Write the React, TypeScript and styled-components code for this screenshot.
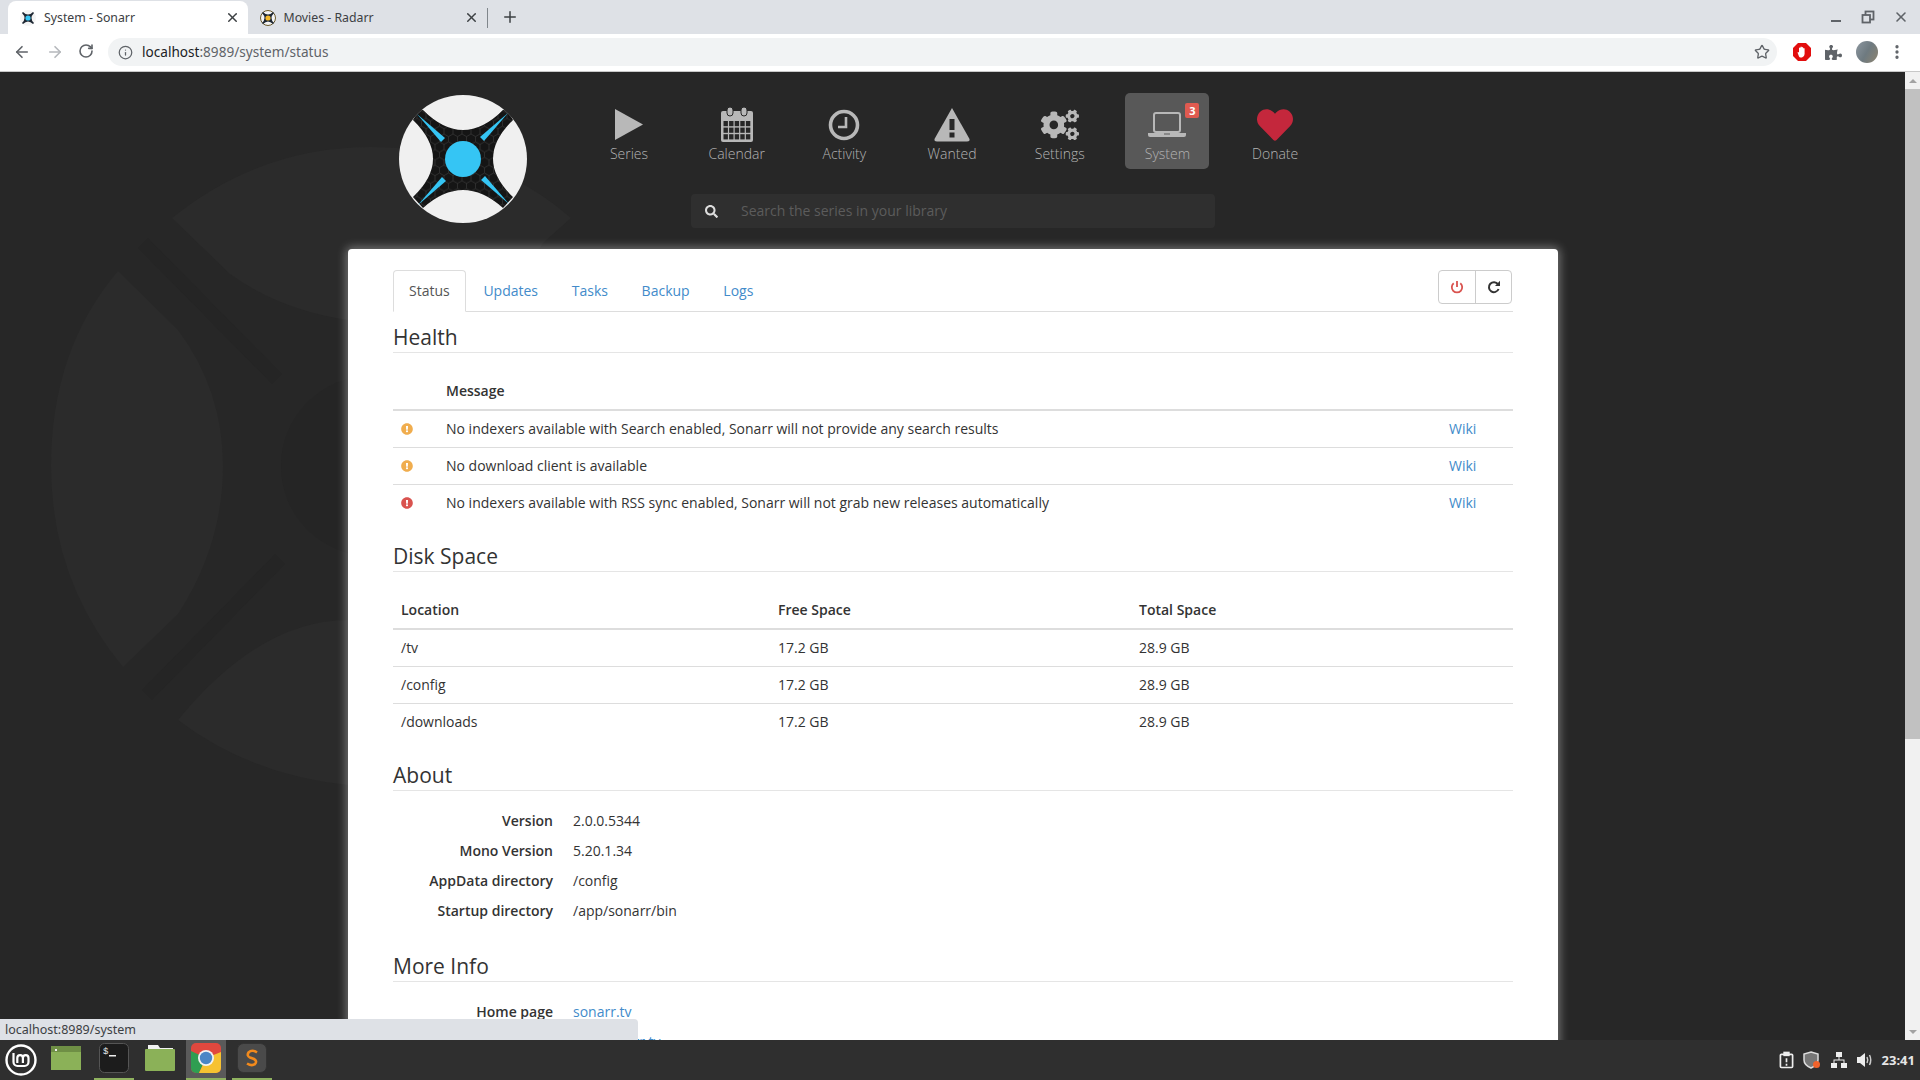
import * as React from 'react';
import styled, { createGlobalStyle } from 'styled-components';
import { ArrowLeft, ArrowRight, Info, MoreVertical, Plus, RotateCw, Star, X } from 'lucide-react';
import { FaCogs, FaExclamationCircle, FaHeart, FaPuzzlePiece, FaSearch } from 'react-icons/fa';

const GlobalStyle = createGlobalStyle`
  html, body {
    margin: 0;
    padding: 0;
    overflow: hidden;
    background: #272727;
  }
  * {
    box-sizing: border-box;
  }
`;

const Screen = styled.div`
  width: 1920px;
  height: 1080px;
  display: flex;
  flex-direction: column;
  overflow: hidden;
  font-family: 'Open Sans', sans-serif;
  font-size: 14px;
  line-height: 20px;
  color: #333;
`;

/* browser chrome */

const TabStrip = styled.div`
  height: 34px;
  flex: none;
  display: flex;
  align-items: flex-end;
  padding-left: 8px;
  background: #dee1e6;
`;

const BrowserTab = styled.div<{ $active?: boolean }>`
  width: 239.5px;
  height: 33px;
  display: flex;
  align-items: center;
  padding: 0 8px 0 12px;
  gap: 8px;
  border-radius: 8px 8px 0 0;
  background: ${p => (p.$active ? '#fff' : 'transparent')};
  font-family: 'Noto Sans', sans-serif;
  font-size: 12.3px;
  color: #3c4043;
`;

const TabTitle = styled.span`
  flex: 1;
`;

const TabSeparator = styled.div`
  width: 1px;
  height: 20px;
  margin-bottom: 6px;
  background: #80868b;
`;

const NewTab = styled.div`
  display: flex;
  margin: 0 0 8px 13px;
  color: #3c4043;
`;

const WindowControls = styled.div`
  margin-left: auto;
  display: flex;
  align-self: stretch;
  align-items: center;
  gap: 18px;
  padding-right: 11px;
  color: #5f6368;
`;

const Toolbar = styled.div`
  height: 38px;
  flex: none;
  display: flex;
  align-items: center;
  padding: 0 13px 1px 13px;
  background: #fff;
  border-bottom: 1px solid #c8c8c8;
  color: #5f6368;
`;

const NavArrows = styled.div`
  display: flex;
  gap: 14.5px;
  margin-right: 14px;
`;

const Omnibox = styled.div`
  width: 1669px;
  height: 28px;
  display: flex;
  align-items: center;
  padding: 0 7px 0 10px;
  gap: 9px;
  border-radius: 14px;
  background: #f1f3f4;
  font-family: 'Noto Sans', sans-serif;
  font-size: 13.6px;
  color: #5f6368;
`;

const Host = styled.span`
  color: #202124;
`;

const OmniText = styled.span`
  flex: 1;
`;

const ToolbarIcons = styled.div`
  display: flex;
  align-items: center;
  gap: 14px;
  margin-left: 16px;
  & > svg:last-child {
    margin-left: -4px;
  }
`;

const Avatar = styled.div`
  width: 22px;
  height: 22px;
  border-radius: 50%;
  background: linear-gradient(120deg, #8d97a0, #6e7a80 50%, #8d8470);
`;

/* page */

const Viewport = styled.div`
  flex: 1;
  min-height: 0;
  position: relative;
  display: flex;
  background: #272727;
  overflow: hidden;
`;

const Watermark = styled.svg`
  position: absolute;
  left: 0;
  top: -72px;
  width: 1920px;
  height: 1080px;
`;

const Page = styled.div`
  position: relative;
  flex: 1;
  min-width: 0;
`;

const Column = styled.div`
  width: 1210px;
  margin-left: 348px;
`;

const Header = styled.header`
  height: 177px;
  display: flex;
  padding: 21px 0 0 51px;
`;

const LogoWrap = styled.div`
  margin: 2px 60px 0 0;
  width: 128px;
  height: 128px;
`;

const HeaderRight = styled.div`
  display: flex;
  flex-direction: column;
`;

const Nav = styled.nav`
  display: flex;
  gap: 23.7px;
`;

const NavItem = styled.div<{ $active?: boolean }>`
  position: relative;
  width: 84px;
  height: 76px;
  display: flex;
  flex-direction: column;
  align-items: center;
  border-radius: 5px;
  background: ${p => (p.$active ? '#585858' : 'transparent')};
  color: #b3b3b3;
  font-weight: 300;
`;

const NavIcon = styled.div`
  height: 51px;
  padding-top: 13px;
  display: flex;
  justify-content: center;
  align-items: center;
`;

const NavLabel = styled.span`
  line-height: 20px;
`;

const Badge = styled.span`
  position: absolute;
  top: 10px;
  right: 10px;
  width: 14px;
  height: 15px;
  border-radius: 2px;
  background: #e05a50;
  color: #fff;
  font-size: 11px;
  font-weight: 700;
  line-height: 15px;
  text-align: center;
`;

const SearchBox = styled.div`
  width: 524px;
  height: 34px;
  margin: 25px 0 0 104px;
  display: flex;
  align-items: center;
  border-radius: 4px;
  background: #2f2f2f;
  color: #ddd;
`;

const SearchAddon = styled.div`
  width: 40px;
  display: flex;
  justify-content: center;
  font-size: 13px;
`;

const SearchText = styled.span`
  margin-left: 10px;
  color: #5c5c5c;
`;

const Card = styled.main`
  height: 830px;
  padding: 21px 45px 0;
  border-radius: 4px 4px 0 0;
  background: #fff;
  box-shadow: 0 0 10px 2px rgba(255, 255, 255, 0.35);
`;

const TabsRow = styled.div`
  display: flex;
  justify-content: space-between;
  height: 42px;
  border-bottom: 1px solid #ddd;
  margin-bottom: 10px;
`;

const Tabs = styled.div`
  display: flex;
  gap: 1.7px;
`;

const PageTab = styled.a<{ $active?: boolean }>`
  height: 42px;
  padding: 10px 15px;
  border: 1px solid ${p => (p.$active ? '#ddd' : 'transparent')};
  border-bottom-color: ${p => (p.$active ? '#fff' : 'transparent')};
  border-radius: 4px 4px 0 0;
  color: ${p => (p.$active ? '#555' : '#428bca')};
`;

const ButtonGroup = styled.div`
  display: flex;
  height: 34px;
  margin-right: 1px;
  border: 1px solid #ccc;
  border-radius: 4px;
`;

const IconButton = styled.div<{ $color: string }>`
  width: 36px;
  display: flex;
  align-items: center;
  justify-content: center;
  color: ${p => p.$color};
  & + & {
    border-left: 1px solid #ccc;
  }
`;

const Legend = styled.h2<{ $tight?: boolean }>`
  margin: 0 0 ${p => (p.$tight ? 19 : 20)}px;
  height: 31px;
  font-size: 21px;
  font-weight: 400;
  line-height: 30px;
  color: #333;
  border-bottom: 1px solid #e5e5e5;
`;

const Table = styled.table<{ $gap: number }>`
  width: 100%;
  margin-bottom: ${p => p.$gap}px;
  border-collapse: collapse;
  table-layout: fixed;
`;

const Col = styled.col<{ $width?: number }>`
  width: ${p => (p.$width ? `${p.$width}px` : 'auto')};
`;

const Th = styled.th<{ $short?: boolean }>`
  padding: ${p => (p.$short ? '8px 8px 7px' : '8px')};
  height: ${p => (p.$short ? 37 : 38)}px;
  text-align: left;
  font-weight: 600;
  border-bottom: 2px solid #ddd;
`;

const Td = styled.td`
  padding: 8px;
  height: 37px;
  border-top: 1px solid #ddd;
`;

const StatusIcon = styled.span<{ $color: string }>`
  display: flex;
  font-size: 12px;
  color: ${p => p.$color};
`;

const Link = styled.a`
  color: #428bca;
`;

const InfoList = styled.dl`
  margin: 0 0 30px;
  display: grid;
  grid-template-columns: 160px 1fr;
  column-gap: 20px;
  row-gap: 10px;
`;

const Term = styled.dt`
  font-weight: 600;
  text-align: right;
`;

const Detail = styled.dd`
  margin: 0;
`;

const Scrollbar = styled.div`
  width: 15px;
  flex: none;
  display: flex;
  flex-direction: column;
  align-items: center;
  background: #f1f1f1;
`;

const ScrollArrow = styled.div<{ $down?: boolean }>`
  height: 17px;
  flex: none;
  display: flex;
  align-items: center;
  justify-content: center;
  &::before {
    content: '';
    border-left: 4px solid transparent;
    border-right: 4px solid transparent;
    ${p => (p.$down ? 'border-top' : 'border-bottom')}: 4px solid #a3a3a3;
  }
`;

const ScrollThumb = styled.div`
  width: 100%;
  height: 650px;
  background: #c1c1c1;
`;

const ScrollRest = styled.div`
  flex: 1;
`;

const StatusBubble = styled.div`
  position: absolute;
  left: 0;
  bottom: 0;
  width: 638px;
  height: 21px;
  padding-left: 5px;
  border-radius: 0 4px 0 0;
  background: #dee1e6;
  font-family: 'Noto Sans', sans-serif;
  font-size: 12.5px;
  line-height: 21px;
  color: #3c4043;
`;

/* desktop panel */

const Taskbar = styled.footer`
  height: 40px;
  flex: none;
  display: flex;
  align-items: stretch;
  background: #2f2f2f;
`;

const Launcher = styled.div`
  display: flex;
  align-items: center;
  padding-left: 4px;
  width: 46px;
`;

const TaskSlot = styled.div<{ $running?: boolean; $hover?: boolean }>`
  width: 40px;
  margin-right: 6px;
  display: flex;
  align-items: center;
  justify-content: center;
  padding-bottom: 3px;
  background: ${p => (p.$hover ? '#5a5a5a' : 'transparent')};
  border-bottom: 2px solid ${p => (p.$running ? '#8fb25f' : 'transparent')};
  &:nth-child(2) {
    margin-right: 8px;
  }
`;

const Tray = styled.div`
  margin-left: auto;
  display: flex;
  align-items: center;
  gap: 10px;
  padding-right: 5px;
  color: #eee;
  & > svg:first-child {
    margin-right: -1px;
  }
`;

const Clock = styled.span`
  margin-left: -1px;
  font-family: 'Noto Sans', sans-serif;
  font-size: 13px;
  font-weight: 700;
  color: #e6e6e6;
`;

const SonarrLogo = () => (
  <svg width="128" height="128" viewBox="0 0 128 128">
    <defs>
      <pattern id="hex" width="9" height="15.6" patternUnits="userSpaceOnUse">
        <path d="M0 2.6 L4.5 0 L9 2.6 M0 2.6 V7.8 L4.5 10.4 L9 7.8 V2.6 M4.5 10.4 V15.6" fill="none" stroke="#3d3d3d" strokeWidth="0.6" />
      </pattern>
      <clipPath id="disc">
        <circle cx="64" cy="64" r="64" />
      </clipPath>
    </defs>
    <circle cx="64" cy="64" r="64" fill="#f0f0f0" />
    <g clipPath="url(#disc)">
      <path d="M24 15 Q64 55 104 15 L109 15 L114 25 Q74 64 114 102 L104 113 Q64 77 24 113 L14 102 Q54 64 14 25 L19 15 Z" fill="#151515" />
      <path d="M24 15 Q64 55 104 15 L109 15 L114 25 Q74 64 114 102 L104 113 Q64 77 24 113 L14 102 Q54 64 14 25 L19 15 Z" fill="url(#hex)" />
    </g>
    {[0, 90, 180, 270].map(a => (
      <polygon key={a} points="18,19 46,43 42,47" fill="#35c5f4" transform={`rotate(${a} 64 64)`} />
    ))}
    <circle cx="64" cy="64" r="18" fill="#35c5f4" />
  </svg>
);

const Favicon = ({ ring, dot }: { ring: string; dot: string }) => (
  <svg width="16" height="16" viewBox="0 0 16 16">
    <circle cx="8" cy="8" r="7.5" fill="#f4f4f4" stroke={ring} strokeWidth="1" />
    <path d="M3 2 Q8 7 13 2 L14 3 Q9 8 14 13 L13 14 Q8 9 3 14 L2 13 Q7 8 2 3 Z" fill="#1d2733" />
    <circle cx="8" cy="8" r="2.6" fill={dot} />
  </svg>
);

const SeriesIcon = () => (
  <svg width="28" height="32" viewBox="0 0 28 32" fill="#b8b8b8">
    <polygon points="0,0 28,15.5 0,31" />
  </svg>
);

const CalendarIcon = () => (
  <svg width="34" height="36" viewBox="0 0 34 36">
    <path d="M3 4 H31 a2 2 0 0 1 2 2 V33 a2 2 0 0 1 -2 2 H3 a2 2 0 0 1 -2 -2 V6 a2 2 0 0 1 2 -2 Z" fill="#b8b8b8" />
    <rect x="7" y="0" width="6" height="9" rx="3" fill="#b8b8b8" stroke="#272727" strokeWidth="1" />
    <rect x="21" y="0" width="6" height="9" rx="3" fill="#b8b8b8" stroke="#272727" strokeWidth="1" />
    {[0, 1, 2, 3, 4].flatMap(c =>
      [0, 1, 2].map(r => (
        <rect key={`${c}${r}`} x={3.5 + c * 5.6} y={14 + r * 6.6} width="4.4" height="5.2" fill="#272727" />
      )),
    )}
  </svg>
);

const ClockIcon = () => (
  <svg width="32" height="32" viewBox="0 0 32 32" fill="none" stroke="#b8b8b8">
    <circle cx="16" cy="16" r="13.5" strokeWidth="3.6" />
    <path d="M18 8 V18 H10" strokeWidth="2.6" />
  </svg>
);

const WarningIcon = () => (
  <svg width="36" height="34" viewBox="0 0 36 34">
    <path d="M18 0 L35.5 31 Q36 33.5 33 33.5 H3 Q0 33.5 0.5 31 Z" fill="#b8b8b8" />
    <rect x="15.5" y="11" width="5" height="11" fill="#272727" />
    <rect x="15.5" y="24.5" width="5" height="5" fill="#272727" />
  </svg>
);

const LaptopIcon = () => (
  <svg width="38" height="26" viewBox="0 0 38 26">
    <rect x="6" y="1" width="26" height="19" rx="2" fill="none" stroke="#b8b8b8" strokeWidth="2" />
    <path d="M0 21 H38 V23 Q38 25 36 25 H2 Q0 25 0 23 Z" fill="#b8b8b8" />
    <rect x="16" y="21.5" width="6" height="1" fill="#585858" />
  </svg>
);

const PowerIcon = () => (
  <svg width="14" height="14" viewBox="0 0 14 14" fill="none" stroke="currentColor" strokeWidth="1.8">
    <path d="M7 1 V7" />
    <path d="M3.7 3.2 A5.2 5.2 0 1 0 10.3 3.2" />
  </svg>
);

const RefreshIcon = () => (
  <svg width="14" height="14" viewBox="0 0 14 14">
    <path d="M11 4.2 A5 5 0 1 0 11.6 9" fill="none" stroke="currentColor" strokeWidth="2" />
    <polygon points="13,0.8 13,6 8,6" fill="currentColor" />
  </svg>
);

const MintIcon = () => (
  <svg width="34" height="34" viewBox="0 0 34 34" fill="none" stroke="#fff">
    <circle cx="17" cy="17" r="14.5" strokeWidth="2.4" />
    <path d="M9.5 10 V19 a4 4 0 0 0 4 4 H20.5 a4 4 0 0 0 4 -4 V15 a2.8 2.8 0 0 0 -5.6 0 V20 M18.9 15 a2.8 2.8 0 0 0 -5.6 0 V20" strokeWidth="2.2" />
  </svg>
);

const GreenWindowIcon = () => (
  <svg width="30" height="24" viewBox="0 0 30 24">
    <rect width="30" height="24" fill="#8bb158" />
    <rect width="30" height="6" fill="#6f8f45" />
    <rect x="4" y="3" width="2" height="2" fill="#eee" />
  </svg>
);

const TerminalIcon = () => (
  <svg width="30" height="30" viewBox="0 0 30 30">
    <rect x="0.5" y="0.5" width="29" height="29" rx="5" fill="#1c1c1c" stroke="#555" />
    <text x="4" y="11" fontFamily="Liberation Mono, monospace" fontSize="9" fill="#eee">$</text>
    <rect x="10" y="12" width="7" height="1.5" fill="#eee" />
  </svg>
);

const FolderIcon = () => (
  <svg width="30" height="26" viewBox="0 0 30 26">
    <path d="M3 0 H13 L15 3 H28 V6 H3 Z" fill="#f2f2f2" />
    <rect y="4" width="30" height="22" rx="1" fill="#8bb158" />
  </svg>
);

const ChromeIcon = () => (
  <svg width="30" height="30" viewBox="0 0 30 30">
    <defs>
      <clipPath id="chromeClip">
        <rect width="30" height="30" rx="5" />
      </clipPath>
    </defs>
    <g clipPath="url(#chromeClip)">
      <rect width="30" height="30" fill="#e0483e" />
      <polygon points="0,8 15,15 8,30 0,30" fill="#2f9e51" />
      <polygon points="15,15 30,9 30,30 8,30" fill="#f6c231" />
      <circle cx="15" cy="15" r="8" fill="#f2f2f2" />
      <circle cx="15" cy="15" r="6.2" fill="#4a86c6" />
    </g>
  </svg>
);

const SublimeIcon = () => (
  <svg width="30" height="30" viewBox="0 0 30 30">
    <rect x="0.5" y="0.5" width="29" height="29" rx="6" fill="#4a4a4a" stroke="#333" />
    <path d="M20 9.5 Q15 6 11.5 9.5 Q9.5 13 13 14.5 L17 16 Q20.5 18 18 21 Q15 23.5 10 20.5" fill="none" stroke="#f28a1c" strokeWidth="2.6" />
  </svg>
);

const ClipboardIcon = () => (
  <svg width="15" height="18" viewBox="0 0 16 18" fill="none" stroke="#eee" strokeWidth="1.8">
    <rect x="1.5" y="3" width="13" height="14" rx="1" />
    <rect x="5.5" y="1" width="5" height="3" fill="#eee" />
    <path d="M8 7 V11.5 M8 13 V15" />
  </svg>
);

const ShieldIcon = () => (
  <svg width="18" height="18" viewBox="0 0 18 18">
    <path d="M8 1 L15 3 V9 Q15 14 8 17 Q1 14 1 9 V3 Z" fill="#777" stroke="#ddd" strokeWidth="1.5" />
    <circle cx="13.5" cy="13.5" r="3.5" fill="#f0622b" />
  </svg>
);

const NetworkIcon = () => (
  <svg width="16" height="16" viewBox="0 0 16 16" fill="#eee">
    <rect x="5" y="0" width="6" height="5" />
    <rect x="0" y="11" width="6" height="5" />
    <rect x="10" y="11" width="6" height="5" />
    <path d="M7.5 5 H8.5 V7.5 H13.5 V11 H12.5 V8.5 H3.5 V11 H2.5 V7.5 H7.5 Z" />
  </svg>
);

const VolumeIcon = () => (
  <svg width="16" height="16" viewBox="0 0 16 16">
    <path d="M0 5 H3 L8 1 V15 L3 11 H0 Z" fill="#eee" />
    <path d="M10 5 Q11.5 8 10 11 M12.5 3 Q15 8 12.5 13" fill="none" stroke="#ccc" strokeWidth="1.5" />
  </svg>
);

const OperaStop = () => (
  <svg width="18" height="18" viewBox="0 0 18 18">
    <polygon points="5,0 13,0 18,5 18,13 13,18 5,18 0,13 0,5" fill="#e20e0e" />
    <path
      d="M6 13.5 L4.5 9.5 Q5 8.5 6 9.5 V5 Q6.7 4 7.4 5 V4 Q8.1 3 8.8 4 V4.5 Q9.5 3.5 10.2 4.5 V5.5 Q10.9 4.7 11.6 5.5 V11 Q11.5 14 9 14.5 H7.5 Q6.5 14.5 6 13.5 Z"
      fill="#fff"
    />
  </svg>
);

const healthRows = [
  { color: '#f0ad4e', text: 'No indexers available with Search enabled, Sonarr will not provide any search results' },
  { color: '#f0ad4e', text: 'No download client is available' },
  { color: '#d9534f', text: 'No indexers available with RSS sync enabled, Sonarr will not grab new releases automatically' },
];

const diskRows = ['/tv', '/config', '/downloads'];

const aboutRows = [
  ['Version', '2.0.0.5344'],
  ['Mono Version', '5.20.1.34'],
  ['AppData directory', '/config'],
  ['Startup directory', '/app/sonarr/bin'],
];

const App = () => (
  <Screen>
    <GlobalStyle />
    <TabStrip>
      <BrowserTab $active>
        <Favicon ring="#f4f4f4" dot="#35c5f4" />
        <TabTitle>System - Sonarr</TabTitle>
        <X size={15} strokeWidth={2.4} />
      </BrowserTab>
      <BrowserTab>
        <Favicon ring="#6b5a2a" dot="#f3b82a" />
        <TabTitle>Movies - Radarr</TabTitle>
        <X size={15} strokeWidth={2.4} />
      </BrowserTab>
      <TabSeparator />
      <NewTab>
        <Plus size={18} strokeWidth={2} />
      </NewTab>
      <WindowControls>
        <svg width="14" height="14" viewBox="0 0 14 14" fill="#5f6368">
          <rect x="2" y="10" width="10" height="2" />
        </svg>
        <svg width="14" height="14" viewBox="0 0 14 14" fill="none" stroke="#5f6368" strokeWidth="1.8">
          <rect x="4.5" y="1.5" width="8" height="8" />
          <rect x="1.5" y="5" width="7.5" height="7.5" fill="#dee1e6" />
        </svg>
        <X size={16} strokeWidth={2.4} />
      </WindowControls>
    </TabStrip>
    <Toolbar>
      <NavArrows>
        <ArrowLeft size={18} strokeWidth={2.2} />
        <ArrowRight size={18} strokeWidth={2.2} color="#b5b8bc" />
        <RotateCw size={16} strokeWidth={2.4} />
      </NavArrows>
      <Omnibox>
        <Info size={15} strokeWidth={2} />
        <OmniText>
          <Host>localhost</Host>:8989/system/status
        </OmniText>
        <Star size={16} strokeWidth={2} />
      </Omnibox>
      <ToolbarIcons>
        <OperaStop />
        <FaPuzzlePiece size={17} color="#5f6368" />
        <Avatar />
        <MoreVertical size={18} strokeWidth={2.4} />
      </ToolbarIcons>
    </Toolbar>
    <Viewport>
      <Watermark viewBox="0 0 1920 1080">
        <g fill="#2b2b2b">
          <path d="M118 271 L178 330 Q223 390 223 466 Q223 545 178 614 L123 667 Q51 580 51 466 Q51 350 118 271 Z" />
          <path d="M172 218 Q260 147 371 147 Q490 147 571 218 L543 243 L500 320 H348 Q280 310 230 274 Z" />
          <path d="M178 720 Q260 620 348 620 H500 V785 H348 Q250 775 178 720 Z" />
        </g>
        <circle cx="371" cy="466" r="90" fill="#252525" />
        <path d="M143 243 L277 379 M280 559 L147 695" stroke="#252525" strokeWidth="14" />
      </Watermark>
      <Page>
        <Column>
          <Header>
            <LogoWrap>
              <SonarrLogo />
            </LogoWrap>
            <HeaderRight>
              <Nav>
                <NavItem>
                  <NavIcon>
                    <SeriesIcon />
                  </NavIcon>
                  <NavLabel>Series</NavLabel>
                </NavItem>
                <NavItem>
                  <NavIcon>
                    <CalendarIcon />
                  </NavIcon>
                  <NavLabel>Calendar</NavLabel>
                </NavItem>
                <NavItem>
                  <NavIcon>
                    <ClockIcon />
                  </NavIcon>
                  <NavLabel>Activity</NavLabel>
                </NavItem>
                <NavItem>
                  <NavIcon>
                    <WarningIcon />
                  </NavIcon>
                  <NavLabel>Wanted</NavLabel>
                </NavItem>
                <NavItem>
                  <NavIcon>
                    <FaCogs size={38} color="#b8b8b8" />
                  </NavIcon>
                  <NavLabel>Settings</NavLabel>
                </NavItem>
                <NavItem $active>
                  <NavIcon>
                    <LaptopIcon />
                  </NavIcon>
                  <NavLabel>System</NavLabel>
                  <Badge>3</Badge>
                </NavItem>
                <NavItem>
                  <NavIcon>
                    <FaHeart size={36} color="#c4273c" />
                  </NavIcon>
                  <NavLabel>Donate</NavLabel>
                </NavItem>
              </Nav>
              <SearchBox>
                <SearchAddon>
                  <FaSearch />
                </SearchAddon>
                <SearchText>Search the series in your library</SearchText>
              </SearchBox>
            </HeaderRight>
          </Header>
          <Card>
            <TabsRow>
              <Tabs>
                <PageTab $active>Status</PageTab>
                <PageTab>Updates</PageTab>
                <PageTab>Tasks</PageTab>
                <PageTab>Backup</PageTab>
                <PageTab>Logs</PageTab>
              </Tabs>
              <ButtonGroup>
                <IconButton $color="#d9534f">
                  <PowerIcon />
                </IconButton>
                <IconButton $color="#333">
                  <RefreshIcon />
                </IconButton>
              </ButtonGroup>
            </TabsRow>

            <Legend $tight>Health</Legend>
            <Table $gap={19}>
              <colgroup>
                <Col $width={45} />
                <Col />
                <Col $width={72} />
              </colgroup>
              <thead>
                <tr>
                  <Th />
                  <Th>Message</Th>
                  <Th />
                </tr>
              </thead>
              <tbody>
                {healthRows.map(row => (
                  <tr key={row.text}>
                    <Td>
                      <StatusIcon $color={row.color}>
                        <FaExclamationCircle />
                      </StatusIcon>
                    </Td>
                    <Td>{row.text}</Td>
                    <Td>
                      <Link>Wiki</Link>
                    </Td>
                  </tr>
                ))}
              </tbody>
            </Table>

            <Legend>Disk Space</Legend>
            <Table $gap={20}>
              <colgroup>
                <Col $width={377} />
                <Col $width={361} />
                <Col />
              </colgroup>
              <thead>
                <tr>
                  <Th $short>Location</Th>
                  <Th $short>Free Space</Th>
                  <Th $short>Total Space</Th>
                </tr>
              </thead>
              <tbody>
                {diskRows.map(path => (
                  <tr key={path}>
                    <Td>{path}</Td>
                    <Td>17.2 GB</Td>
                    <Td>28.9 GB</Td>
                  </tr>
                ))}
              </tbody>
            </Table>

            <Legend>About</Legend>
            <InfoList>
              {aboutRows.map(([term, value]) => (
                <React.Fragment key={term}>
                  <Term>{term}</Term>
                  <Detail>{value}</Detail>
                </React.Fragment>
              ))}
            </InfoList>

            <Legend>More Info</Legend>
            <InfoList>
              <Term>Home page</Term>
              <Detail>
                <Link>sonarr.tv</Link>
              </Detail>
              <Term>Wiki</Term>
              <Detail>
                <Link>wiki.sonarr.tv</Link>
              </Detail>
            </InfoList>
          </Card>
        </Column>
        <StatusBubble>localhost:8989/system</StatusBubble>
      </Page>
      <Scrollbar>
        <ScrollArrow />
        <ScrollThumb />
        <ScrollRest />
        <ScrollArrow $down />
      </Scrollbar>
    </Viewport>
    <Taskbar>
      <Launcher>
        <MintIcon />
      </Launcher>
      <TaskSlot>
        <GreenWindowIcon />
      </TaskSlot>
      <TaskSlot $running>
        <TerminalIcon />
      </TaskSlot>
      <TaskSlot>
        <FolderIcon />
      </TaskSlot>
      <TaskSlot $running $hover>
        <ChromeIcon />
      </TaskSlot>
      <TaskSlot $running>
        <SublimeIcon />
      </TaskSlot>
      <Tray>
        <ClipboardIcon />
        <ShieldIcon />
        <NetworkIcon />
        <VolumeIcon />
        <Clock>23:41</Clock>
      </Tray>
    </Taskbar>
  </Screen>
);

export default App;
